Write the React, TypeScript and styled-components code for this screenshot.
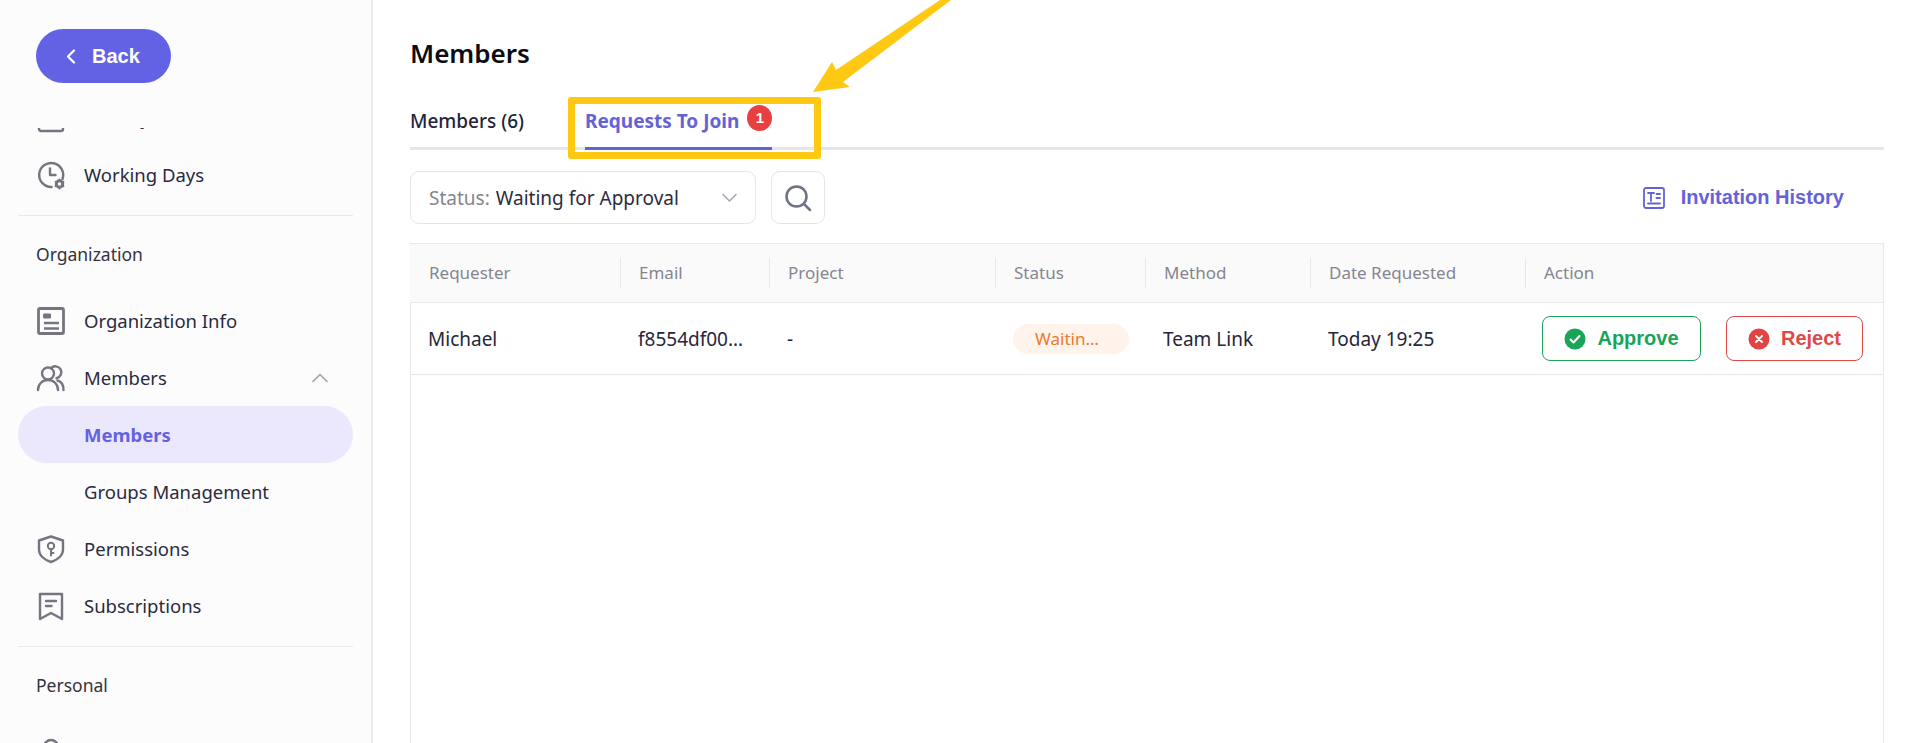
import React from 'react';
import styled, { createGlobalStyle } from 'styled-components';

const Global = createGlobalStyle`
  html, body { margin: 0; padding: 0; height: 100%; background: #fff; }
  #root { height: 100%; }
  * { box-sizing: border-box; }
`;

const Page = styled.div`
  display: grid;
  grid-template-columns: 373px 1fr;
  height: 100vh;
  overflow: hidden;
  font-family: "Noto Sans", "Liberation Sans", sans-serif;
  color: #24243a;
`;

const Sidebar = styled.aside`
  display: flex;
  flex-direction: column;
  background: #fcfcfd;
  border-right: 2px solid #ececf0;
  min-height: 0;
`;

const BackBar = styled.div`
  flex: 0 0 128px;
  padding: 29px 0 0 36px;
`;

const BackButton = styled.button`
  display: flex;
  align-items: center;
  width: 135px;
  height: 54px;
  padding: 0 0 0 30px;
  gap: 16px;
  border: 0;
  border-radius: 27px;
  background: #6462e4;
  color: #fff;
  font: bold 20px "Liberation Sans", Arial, sans-serif;
`;

const NavScroll = styled.nav`
  flex: 1;
  min-height: 0;
  overflow: hidden;
  padding: 0 18px;
`;

const NavList = styled.div`
  margin-top: -39px;
`;

const NavItem = styled.div<{ $active?: boolean; $bold?: boolean }>`
  display: flex;
  align-items: center;
  height: 57px;
  padding: 0 18px;
  border-radius: 29px;
  font-size: 18.5px;
  font-weight: ${p => (p.$active ? 700 : 400)};
  background: ${p => (p.$active ? '#ebe8fe' : 'transparent')};
  color: ${p => (p.$active ? '#6462e0' : '#2a2a3e')};
`;

const NavIcon = styled.span`
  flex: 0 0 30px;
  width: 30px;
  height: 30px;
  margin-right: 18px;
  color: #74757f;
  display: flex;
`;

const SubLabel = styled.span`
  margin-left: 48px;
`;

const Chevron = styled.span`
  margin-left: auto;
  margin-right: 7px;
  display: flex;
  color: #a0a1aa;
`;

const Divider = styled.div`
  height: 1px;
  margin-top: 12px;
  background: #e9e9ed;
`;

const SectionLabel = styled.div`
  height: 76px;
  display: flex;
  align-items: center;
  padding-left: 18px;
  font-size: 17.5px;
  color: #33333f;
`;

const Main = styled.main`
  display: flex;
  flex-direction: column;
  min-width: 0;
  min-height: 0;
  padding: 33px 36px 0 37px;
`;

const Title = styled.h1`
  margin: 0 0 24px;
  height: 40px;
  line-height: 40px;
  font-size: 26px;
  font-weight: 600;
  color: #0c0c14;
`;

const Tabs = styled.div`
  display: flex;
  gap: 61px;
  border-bottom: 3px solid #e5e5ea;
  height: 53px;
`;

const Tab = styled.div<{ $active?: boolean }>`
  position: relative;
  display: flex;
  align-items: flex-start;
  height: 53px;
  padding-top: 9px;
  line-height: 30px;
  font-size: 19px;
  font-weight: ${p => (p.$active ? 700 : 500)};
  color: ${p => (p.$active ? '#6462d8' : '#24243a')};
  border-bottom: 3px solid ${p => (p.$active ? '#6462d8' : 'transparent')};
`;

const TabBadge = styled.span`
  width: 25px;
  height: 26px;
  margin: -1px 0 0 8px;
  border-radius: 50%;
  background: #e84040;
  color: #fff;
  font: bold 15px/26px "Liberation Sans", Arial, sans-serif;
  text-align: center;
`;

const Highlight = styled.div`
  position: absolute;
  left: -17px;
  top: 0;
  width: 253px;
  height: 62px;
  border: 7px solid #ffc813;
  border-radius: 3px;
  pointer-events: none;
`;

const ArrowSvg = styled.svg`
  position: absolute;
  left: 220px;
  top: -97px;
  pointer-events: none;
`;

const Toolbar = styled.div`
  display: flex;
  align-items: center;
  margin-top: 21px;
  height: 53px;
  gap: 15px;
`;

const SelectBox = styled.div`
  display: flex;
  align-items: center;
  width: 346px;
  height: 53px;
  padding: 0 18px;
  border: 1px solid #e6e6ea;
  border-radius: 9px;
  font-size: 19px;
  color: #2c2c40;
`;

const SelectPrefix = styled.span`
  color: #85858f;
  margin-right: 6px;
`;

const SelectChevron = styled.span`
  margin-left: auto;
  display: flex;
  color: #a6a7b2;
`;

const IconButton = styled.button`
  width: 54px;
  height: 53px;
  border: 1px solid #e6e6ea;
  border-radius: 9px;
  background: #fff;
  padding: 0;
  display: flex;
  align-items: center;
  justify-content: center;
  color: #6f7186;
`;

const HistoryLink = styled.a`
  margin-left: auto;
  margin-right: 40px;
  display: flex;
  align-items: center;
  gap: 16px;
  color: #6462d8;
  font: bold 20px "Liberation Sans", Arial, sans-serif;
`;

const Table = styled.div`
  flex: 1;
  margin-top: 19px;
  border: 1px solid #e8e8ec;
  border-bottom: 0;
`;

const columns = '210px 149px 226px 150px 165px 215px 1fr';

const HeaderRow = styled.div`
  display: grid;
  grid-template-columns: ${columns};
  align-items: center;
  height: 59px;
  background: #fafafa;
  border-bottom: 1px solid #e8e8ec;
  margin-left: -1px;
`;

const HeaderCell = styled.div<{ $first?: boolean }>`
  height: 30px;
  line-height: 30px;
  padding-left: 18px;
  font-size: 17px;
  color: #85858f;
  border-left: 1px solid ${p => (p.$first ? 'transparent' : '#e9e9ec')};
`;

const BodyRow = styled.div`
  display: grid;
  grid-template-columns: ${columns};
  align-items: center;
  height: 72px;
  border-bottom: 1px solid #e8e8ec;
  margin-left: -1px;
`;

const Cell = styled.div`
  padding: 0 18px;
  font-size: 19px;
  color: #26263a;
  overflow: hidden;
  white-space: nowrap;
  text-overflow: ellipsis;
`;

const ActionCell = styled.div`
  display: flex;
  gap: 25px;
  padding-left: 17px;
`;

const StatusPill = styled.span`
  display: block;
  width: 116px;
  height: 30px;
  padding: 0 22px;
  border-radius: 15px;
  background: #fff3ec;
  color: #ea7a2e;
  font-size: 17px;
  line-height: 30px;
  overflow: hidden;
  white-space: nowrap;
  text-overflow: ellipsis;
`;

const ActionButton = styled.button<{ $color: string; $w: number }>`
  display: flex;
  align-items: center;
  justify-content: center;
  gap: 11px;
  width: ${p => p.$w}px;
  height: 45px;
  border: 1px solid ${p => p.$color};
  border-radius: 8px;
  background: #fff;
  color: ${p => p.$color};
  font: bold 20px "Liberation Sans", Arial, sans-serif;
  padding: 0;
`;

const Svg: React.FC<{ size?: number; children: React.ReactNode; sw?: number }> = ({ size = 30, children, sw = 2.4 }) => (
  <svg width={size} height={size} viewBox="0 0 30 30" fill="none" stroke="currentColor" strokeWidth={sw} strokeLinecap="round" strokeLinejoin="round">
    {children}
  </svg>
);

const CalendarIcon = () => (
  <Svg>
    <rect x="3" y="4" width="24" height="24" rx="2" />
    <path d="M3 11h24M9 2v4M21 2v4" />
  </Svg>
);

const ClockGearIcon = () => (
  <Svg>
    <path d="M15.5 27a12 12 0 1 1 11-8" />
    <path d="M14 8.5V15h5.5" />
    <circle cx="23.5" cy="24" r="3.2" strokeWidth="3" />
    <path d="M23.5 19.3v1.5M23.5 27.2v1.5M19.5 21.7l1.3.8M26.2 25.5l1.3.8M19.5 26.3l1.3-.8M26.2 22.5l1.3-.8" strokeWidth="1.8" />
  </Svg>
);

const InfoIcon = () => (
  <Svg>
    <rect x="2.5" y="2.5" width="25" height="25" rx="1.5" strokeWidth="2.8" />
    <path d="M8 8h6.5v4H8z" fill="currentColor" strokeWidth="1" />
    <path d="M8 17h15M8 22.5h15" strokeWidth="2.6" strokeLinecap="butt" />
  </Svg>
);

const UsersIcon = () => (
  <Svg>
    <circle cx="12" cy="10.5" r="6" />
    <path d="M15 5.2a6 6 0 1 1 5.5 10" />
    <path d="M2 27c0-6 4.5-10 10-10s10 4 10 10" />
    <path d="M21.5 17.5c3.500 1 6 4.500 6 9.500" />
  </Svg>
);

const ShieldIcon = () => (
  <Svg>
    <path d="M15 2.500 27 6.500V15.500C27 21.500 21.500 26 15 28 8.500 26 3 21.500 3 15.500V6.500Z" />
    <circle cx="15" cy="12" r="3.200" strokeWidth="2" />
    <path d="M15 15.200V21.500M15 19h2.500" strokeWidth="2" />
  </Svg>
);

const BookmarkIcon = () => (
  <Svg>
    <path d="M4 3h22v25l-11-6-11 6z" />
    <path d="M10 10h10M10 15h5.500" />
  </Svg>
);

const PersonIcon = () => (
  <Svg>
    <circle cx="15" cy="10" r="7" />
    <path d="M3 28c0-6 5-10 12-10s12 4 12 10" />
  </Svg>
);

const ChevronUp = () => (
  <svg width="16" height="10" viewBox="0 0 16 10" fill="none" stroke="currentColor" strokeWidth="1.600" strokeLinecap="round" strokeLinejoin="round">
    <path d="M1 8.500 8 1.500l7 7" />
  </svg>
);

const ChevronDown = () => (
  <svg width="15" height="10" viewBox="0 0 15 10" fill="none" stroke="currentColor" strokeWidth="1.600" strokeLinecap="round" strokeLinejoin="round">
    <path d="M1 1.500 7.500 8 14 1.500" />
  </svg>
);

const ChevronLeft = () => (
  <svg width="10" height="15" viewBox="0 0 10 15" fill="none" stroke="currentColor" strokeWidth="2.200" strokeLinecap="round" strokeLinejoin="round">
    <path d="M8 1.500 2 7.500l6 6" />
  </svg>
);

const SearchIcon = () => (
  <svg width="28" height="28" viewBox="0 0 28 28" fill="none" stroke="currentColor" strokeWidth="2.500" strokeLinecap="round">
    <circle cx="12.500" cy="12.500" r="10" />
    <path d="M20 20l6 6" />
  </svg>
);

const HistoryIcon = () => (
  <svg width="22" height="22" viewBox="0 0 22 22" fill="none" stroke="currentColor" strokeWidth="1.800" strokeLinecap="round">
    <rect x="1" y="1" width="20" height="20" rx="2" />
    <path d="M5 6h6M8 6v8M13.500 7H17M13.500 11H17M5 16.500h12" />
  </svg>
);

const CheckIcon = () => (
  <svg width="22" height="22" viewBox="0 0 22 22">
    <circle cx="11" cy="11" r="10.500" fill="#18a558" />
    <path d="M6.500 11.500l3 3 6-6.500" fill="none" stroke="#fff" strokeWidth="2" strokeLinecap="round" strokeLinejoin="round" />
  </svg>
);

const CrossIcon = () => (
  <svg width="22" height="22" viewBox="0 0 22 22">
    <circle cx="11" cy="11" r="10.500" fill="#e24444" />
    <path d="M8 8l6 6M14 8l-6 6" fill="none" stroke="#fff" strokeWidth="2" strokeLinecap="round" />
  </svg>
);

const headers = ['Requester', 'Email', 'Project', 'Status', 'Method', 'Date Requested', 'Action'];

export default function App() {
  return (
    <>
      <Global />
      <Page>
        <Sidebar>
          <BackBar>
            <BackButton>
              <ChevronLeft />
              Back
            </BackButton>
          </BackBar>
          <NavScroll>
            <NavList>
              <NavItem><NavIcon><CalendarIcon /></NavIcon>Holiday</NavItem>
              <NavItem><NavIcon><ClockGearIcon /></NavIcon>Working Days</NavItem>
              <Divider />
              <SectionLabel>Organization</SectionLabel>
              <NavItem><NavIcon><InfoIcon /></NavIcon>Organization Info</NavItem>
              <NavItem>
                <NavIcon><UsersIcon /></NavIcon>Members
                <Chevron><ChevronUp /></Chevron>
              </NavItem>
              <NavItem $active><SubLabel>Members</SubLabel></NavItem>
              <NavItem><SubLabel>Groups Management</SubLabel></NavItem>
              <NavItem><NavIcon><ShieldIcon /></NavIcon>Permissions</NavItem>
              <NavItem><NavIcon><BookmarkIcon /></NavIcon>Subscriptions</NavItem>
              <Divider />
              <SectionLabel>Personal</SectionLabel>
              <NavItem><NavIcon><PersonIcon /></NavIcon>Profile</NavItem>
            </NavList>
          </NavScroll>
        </Sidebar>
        <Main>
          <Title>Members</Title>
          <Tabs>
            <Tab>Members (6)</Tab>
            <Tab $active>
              Requests To Join
              <TabBadge>1</TabBadge>
              <Highlight />
              <ArrowSvg width="150" height="100" viewBox="0 0 150 100">
                <path d="M8 92 27 62 31 70 135 0H146L38 82 45 87Z" fill="#ffc813" />
              </ArrowSvg>
            </Tab>
          </Tabs>
          <Toolbar>
            <SelectBox>
              <SelectPrefix>Status:</SelectPrefix>Waiting for Approval
              <SelectChevron><ChevronDown /></SelectChevron>
            </SelectBox>
            <IconButton><SearchIcon /></IconButton>
            <HistoryLink><HistoryIcon />Invitation History</HistoryLink>
          </Toolbar>
          <Table>
            <HeaderRow>
              {headers.map((h, i) => (
                <HeaderCell key={h} $first={i === 0}>{h}</HeaderCell>
              ))}
            </HeaderRow>
            <BodyRow>
              <Cell>Michael</Cell>
              <Cell>f8554df00c1e42a7@mail.com</Cell>
              <Cell>-</Cell>
              <Cell><StatusPill>Waiting for Approval</StatusPill></Cell>
              <Cell>Team Link</Cell>
              <Cell>Today 19:25</Cell>
              <ActionCell>
                <ActionButton $color="#18a558" $w={159}><CheckIcon />Approve</ActionButton>
                <ActionButton $color="#e04848" $w={137}><CrossIcon />Reject</ActionButton>
              </ActionCell>
            </BodyRow>
          </Table>
        </Main>
      </Page>
    </>
  );
}
